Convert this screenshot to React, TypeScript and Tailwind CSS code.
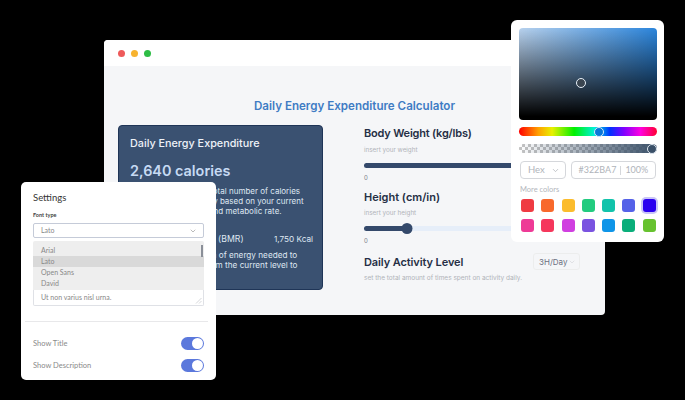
import { ChevronDown } from 'lucide-react'

const SWATCHES = [
  '#ef3b42', '#f8692c', '#fbbc2d', '#22cb7f', '#12c3ab', '#5562e8', '#2a00ef',
  '#ee3a96', '#f5375c', '#d03fe0', '#7a53e0', '#0f95e8', '#0aae7a', '#67c22f',
]

function Toggle() {
  return (
    <div className="flex h-[13px] w-[23px] items-center justify-end rounded-full bg-[#5b78dc] pr-[1px]">
      <div className="h-[11px] w-[11px] rounded-full bg-white" />
    </div>
  )
}

function Slider({ percent, thumb }: { percent: number; thumb?: boolean }) {
  return (
    <div className="relative h-[5px] w-full rounded-full bg-[#e6eef9]">
      <div className="h-full rounded-full bg-[#34496b]" style={{ width: `${percent}%` }} />
      {thumb && (
        <div
          className="absolute top-[-3px] h-[11px] w-[11px] -translate-x-1/2 rounded-full bg-[#34496b]"
          style={{ left: `${percent}%` }}
        />
      )}
    </div>
  )
}

function Calculator() {
  return (
    <div className="absolute left-[104px] top-[40px] flex h-[275px] w-[501px] flex-col overflow-hidden rounded-[4px] bg-[#f5f6f8] font-['Inter',sans-serif]">
      <div className="flex h-[26px] items-center gap-[6px] bg-white px-[14px]">
        <span className="h-[7px] w-[7px] rounded-full bg-[#ee5a5a]" />
        <span className="h-[7px] w-[7px] rounded-full bg-[#f7b32f]" />
        <span className="h-[7px] w-[7px] rounded-full bg-[#2dbd45]" />
      </div>

      <h1 className="mt-[32px] text-center text-[11.6px] leading-[16px] font-semibold text-[#3f7cc4]">
        Daily Energy Expenditure Calculator
      </h1>

      <div className="mt-[11px] flex pl-[14px]">
        <div className="h-[165px] w-[205px] rounded-[4px] border border-[#1f3557] bg-[#3a5171] pl-[11px] pr-[9px] pt-[10px] text-[#dfe7f2]">
          <p className="text-[10.8px] leading-[16px] font-medium text-[#eef2f8]">Daily Energy Expenditure</p>
          <p className="mt-[9px] text-[14.4px] leading-[20px] font-semibold text-[#c6daf3]">2,640 calories</p>
          <p className="mt-[5px] text-[8px] leading-[10px] whitespace-nowrap">
            This is the estimated total number of calories
            <br />
            you will burn every day based on your current
            <br />
            activity level, weight and metabolic rate.
          </p>
          <div className="mt-[17px] flex justify-between leading-[12px]">
            <span className="text-[8.7px]">Basal Metabolic Rate (BMR)</span>
            <span className="text-[8.2px]">1,750 Kcal</span>
          </div>
          <p className="mt-[5px] text-[8.2px] leading-[10px] whitespace-nowrap">
            It is the daily total sum of energy needed to
            <br />
            to move your body from the current level to
          </p>
        </div>

        <div className="ml-[41px] flex w-[216px] flex-col">
          <p className="text-[11px] leading-[16px] font-semibold tracking-[-0.2px] text-[#252f45]">Body Weight (kg/lbs)</p>
          <p className="mt-[5px] text-[6.3px] leading-[8px] text-[#b0b3b9]">insert your weight</p>
          <div className="mt-[9px]">
            <Slider percent={100} />
          </div>
          <p className="mt-[6px] text-[6px] leading-[8px] text-[#777c85]">0</p>

          <p className="mt-[7px] text-[11px] leading-[16px] font-semibold text-[#252f45]">Height (cm/in)</p>
          <p className="mt-[4px] text-[6.3px] leading-[8px] text-[#b0b3b9]">insert your height</p>
          <div className="mt-[9px]">
            <Slider percent={20} thumb />
          </div>
          <p className="mt-[6px] text-[6px] leading-[8px] text-[#777c85]">0</p>

          <div className="mt-[8px] flex items-center justify-between">
            <p className="text-[11px] leading-[16px] font-semibold tracking-[-0.1px] text-[#252f45]">Daily Activity Level</p>
            <div className="flex h-[17px] w-[47px] items-center justify-between rounded-[3px] border border-[#eceded] pl-[5px] pr-[3px] text-[8px] text-[#6b7080]">
              3H/Day
              <ChevronDown className="h-[8px] w-[8px] text-[#d5d7db]" />
            </div>
          </div>
          <p className="mt-[4px] text-[6.5px] leading-[8px] text-[#b0b3b9]">
            set the total amount of times spent on activity daily.
          </p>
        </div>
      </div>
    </div>
  )
}

function Settings() {
  return (
    <div className="absolute left-[21px] top-[182px] flex h-[198px] w-[195px] flex-col rounded-[5px] bg-white font-['Lato',sans-serif]">
      <div className="flex flex-col px-[12px]">
        <p className="mt-[9px] text-[9.5px] leading-[13px] text-[#333]">Settings</p>
        <p className="mt-[7px] text-[5.5px] leading-[8px] font-bold text-[#444]">Font type</p>
        <div className="mt-[4px] flex h-[15px] items-center justify-between rounded-[2px] border border-[#c5cbd8] pl-[7px] pr-[6px] text-[7px] text-[#888]">
          Lato
          <ChevronDown className="h-[8px] w-[8px] text-[#999]" />
        </div>
        <div className="relative mt-[3px] flex h-[49px] flex-col rounded-t-[2px] bg-[#eeeeee] pt-[4px] text-[7px] leading-[11px] text-[#888]">
          <span className="pl-[8px]">Arial</span>
          <span className="bg-[#d9d9d9] pl-[8px]">Lato</span>
          <span className="pl-[8px]">Open Sans</span>
          <span className="pl-[8px]">David</span>
          <span className="absolute right-[1px] top-[4px] h-[12px] w-[2px] bg-[#8a8f98]" />
        </div>
        <div className="relative flex h-[16px] items-center rounded-b-[2px] border border-t-0 border-[#dfe1e6] pl-[7px] text-[7px] text-[#888]">
          Ut non varius nisl urna.
          <svg className="absolute bottom-[1px] right-[1px] h-[7px] w-[7px]" viewBox="0 0 7 7" fill="none" stroke="#c4c6ca" strokeWidth="0.7">
            <path d="M1 6.5 6.5 1M4 6.5 6.5 4" />
          </svg>
        </div>
      </div>
      <div className="mx-[4px] mt-[15px] h-px w-[183px] bg-[#e8e8ea]" />
      <div className="mt-[15px] flex flex-col gap-[9px] px-[12px] text-[7.5px] text-[#8a8a8a]">
        <div className="flex h-[13px] items-center justify-between">
          Show Title
          <Toggle />
        </div>
        <div className="flex h-[13px] items-center justify-between">
          Show Description
          <Toggle />
        </div>
      </div>
    </div>
  )
}

function ColorPicker() {
  return (
    <div className="absolute left-[511px] top-[20px] flex h-[222px] w-[153px] flex-col rounded-[6px] bg-white px-[8px] pt-[8px] font-['Lato',sans-serif]">
      <div className="relative h-[92px] w-[138px] rounded-[4px] bg-[linear-gradient(to_bottom,transparent,#000_96%),linear-gradient(to_right,#b8d2ee,#2b85dc)]">
        <div className="absolute left-[57px] top-[50px] h-[10px] w-[10px] rounded-full border border-[#e8f0f8] bg-[#3a4550]" />
      </div>
      <div className="relative mt-[7px] h-[9px] w-[138px] rounded-full bg-[linear-gradient(to_right,#ff0000,#ffa000_14%,#e8f000_24%,#00f000_40%,#00f0e0_55%,#0030ff_66%,#8000ff_76%,#ff00e0_88%,#ff0030)]">
        <div className="absolute left-[75px] top-[-0.5px] h-[10px] w-[10px] rounded-full border border-[#d8e8f8] bg-[#0a78d8]" />
      </div>
      <div className="relative mt-[8px] h-[9px] w-[138px] rounded-full bg-[linear-gradient(to_right,transparent,#3a5068),repeating-conic-gradient(#c4c4c4_0%_25%,#ffffff_0%_50%)] bg-[length:100%_100%,6px_6px]">
        <div className="absolute left-[128px] top-[-0.5px] h-[10px] w-[10px] rounded-full border border-[#e0e8f0] bg-[#3a5068]" />
      </div>
      <div className="mt-[8px] flex h-[18px] gap-[5px] text-[#b0b4ba]">
        <div className="ml-[1px] flex w-[46px] items-center justify-between rounded-[4px] border border-[#d5d7db] pl-[7px] pr-[5px] text-[9.5px]">
          Hex
          <ChevronDown className="h-[9px] w-[9px]" />
        </div>
        <div className="flex w-[86px] items-center justify-center rounded-[4px] border border-[#d5d7db] text-[9px]">
          #322BA7
          <span className="mx-[4px] h-[9px] w-px bg-[#d5d7db]" />
          100%
        </div>
      </div>
      <p className="ml-[1px] mt-[6px] text-[7.5px] leading-[10px] text-[#b3b6bc]">More colors</p>
      <div className="mt-[4px] grid grid-cols-7 gap-x-[7px] gap-y-[7px] pl-[2px]">
        {SWATCHES.map((color, i) => (
          <div
            key={color}
            className={`h-[13px] w-[13px] rounded-[3px] ${i === 6 ? 'ring-2 ring-[#c9c5f7]' : ''}`}
            style={{ backgroundColor: color }}
          />
        ))}
      </div>
    </div>
  )
}

export default function App() {
  return (
    <div className="relative h-[400px] w-[685px] overflow-hidden bg-black">
      <Calculator />
      <Settings />
      <ColorPicker />
    </div>
  )
}
